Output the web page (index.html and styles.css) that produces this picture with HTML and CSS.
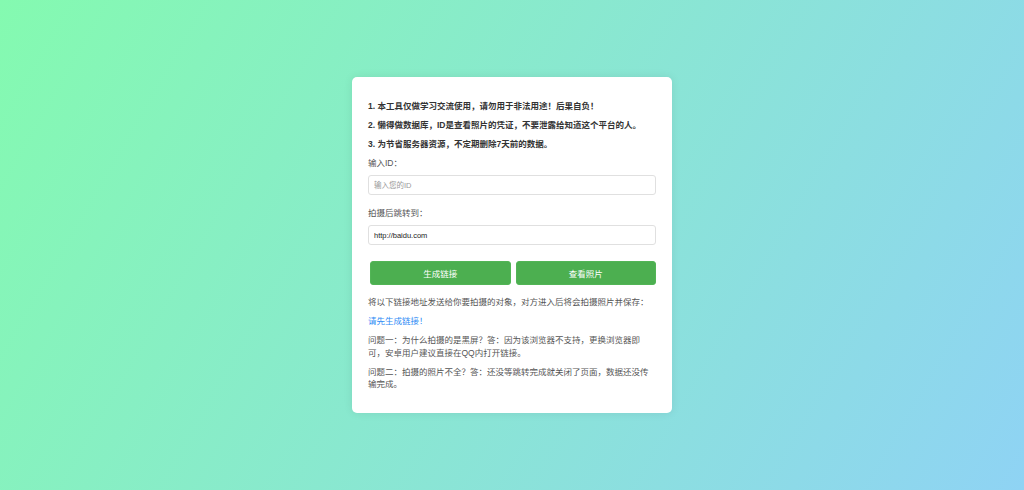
FILE: index.html
```html
<!DOCTYPE html>
<html lang="zh-CN">
<head>
<meta charset="utf-8">
<title>拍照工具</title>
<link rel="stylesheet" href="styles.css">
</head>
<body>
<div class="page">
  <div class="card">
    <p class="notice">1. 本工具仅做学习交流使用，请勿用于非法用途！后果自负！</p>
    <p class="notice">2. 懒得做数据库，ID是查看照片的凭证，不要泄露给知道这个平台的人。</p>
    <p class="notice">3. 为节省服务器资源，不定期删除7天前的数据。</p>
    <p class="label">输入ID：</p>
    <input class="field" type="text" placeholder="输入您的ID">
    <p class="label label-second">拍摄后跳转到：</p>
    <input class="field" type="text" value="http://baidu.com">
    <div class="actions">
      <button class="btn">生成链接</button>
      <button class="btn">查看照片</button>
    </div>
    <p class="text text-first">将以下链接地址发送给你要拍摄的对象，对方进入后将会拍摄照片并保存：</p>
    <p class="text link">请先生成链接！</p>
    <p class="text">问题一：为什么拍摄的是黑屏？答：因为该浏览器不支持，更换浏览器即可，安卓用户建议直接在QQ内打开链接。</p>
    <p class="text">问题二：拍摄的照片不全？答：还没等跳转完成就关闭了页面，数据还没传输完成。</p>
  </div>
</div>
</body>
</html>
```

FILE: styles.css
```css
* {
  box-sizing: border-box;
}

html, body {
  margin: 0;
  padding: 0;
  height: 100%;
}

body {
  background: linear-gradient(120deg, #84fab0 0%, #8fd3f4 100%);
  font-family: "Liberation Sans", "Noto Sans CJK SC", sans-serif;
  font-size: 8.5px;
  line-height: 12.5px;
  color: #555;
}

.page {
  height: 100%;
  display: flex;
  align-items: center;
  justify-content: center;
}

.card {
  width: 320px;
  background: #fff;
  border-radius: 5px;
  padding: 16px;
  box-shadow: 0 0 10px rgba(0, 0, 0, 0.08);
}

.card p {
  margin: 6.5px 0;
}

.notice {
  font-weight: bold;
  color: #333;
}

.label {
  color: #555;
}

.card .label {
  margin-bottom: 6px;
}

.card .label-second {
  margin-top: 12px;
  margin-bottom: 5.5px;
}

.field {
  display: block;
  width: 100%;
  height: 20px;
  border: 1px solid #e0e0e0;
  border-radius: 3px;
  padding: 0 5px;
  font-family: "Liberation Sans", "Noto Sans CJK SC", sans-serif;
  font-size: 7.5px;
  color: #222;
  outline: none;
}

.field::placeholder {
  color: #999;
}

.actions {
  display: grid;
  grid-template-columns: 1fr 1fr;
  gap: 5px;
  padding-left: 2px;
  margin-top: 15.5px;
}

.btn {
  height: 24px;
  border: 1px solid #52b556;
  border-radius: 3px;
  background: #4caf50;
  color: #fff;
  font-family: "Liberation Sans", "Noto Sans CJK SC", sans-serif;
  font-size: 8.5px;
  cursor: pointer;
}

.card .text-first {
  margin-top: 11.5px;
}

.text {
  color: #555;
}

.link {
  color: #2f8cf5;
}
```
